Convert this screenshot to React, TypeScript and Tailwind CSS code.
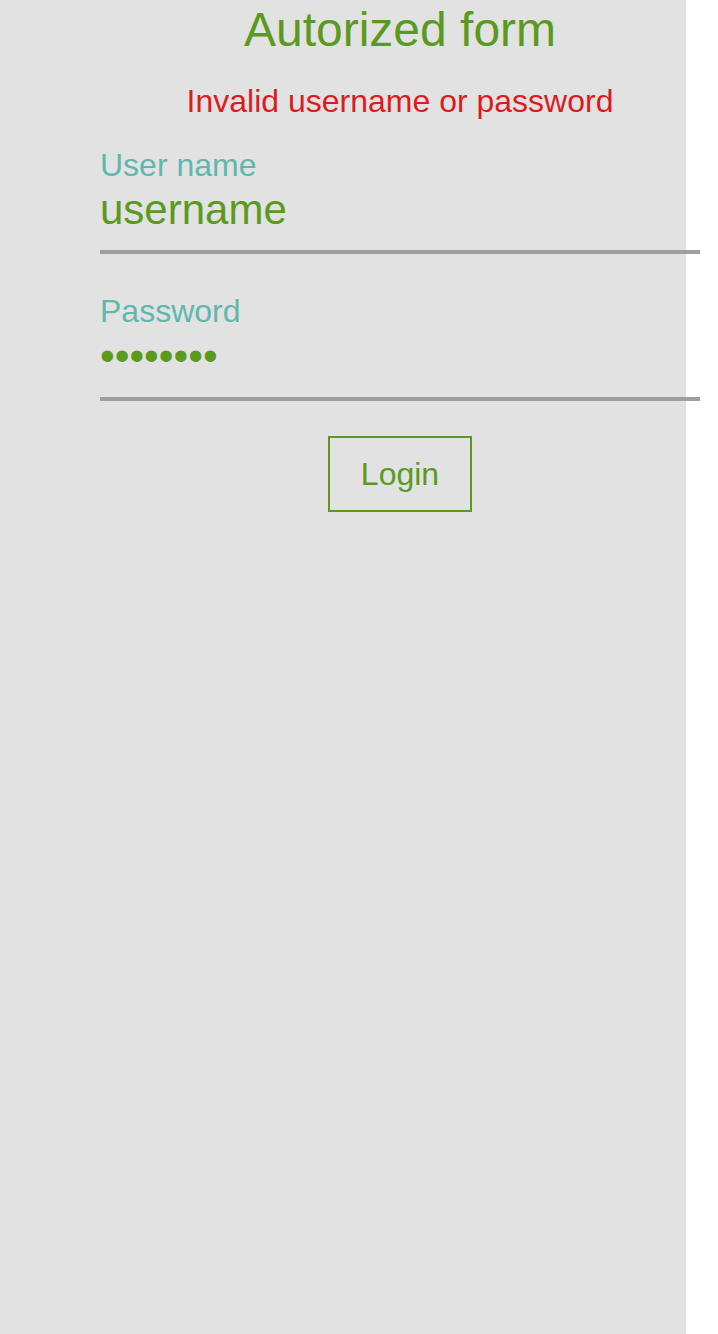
import { useState } from 'react';

export default function App() {
  const [username, setUsername] = useState('username');
  const [password, setPassword] = useState('12345678');

  return (
    <div className="w-[686px] min-h-screen bg-[#e2e2e2] font-['Liberation_Sans',Arial,sans-serif]">
      <form
        onSubmit={(e) => e.preventDefault()}
        className="ml-[100px] w-[600px] pt-[2px] flex flex-col"
      >
        <h1 className="text-center text-[48px] leading-[normal] font-normal text-[#5a9a1e]">
          Autorized form
        </h1>

        <p className="mt-[26px] text-center text-[32px] leading-[normal] text-[#dd1b1f]">
          Invalid username or password
        </p>

        <label className="mt-[27px] text-[32px] leading-[normal] text-[#5fb7ae]">User name</label>
        <input
          value={username}
          onChange={(e) => setUsername(e.target.value)}
          type="text"
          className="w-full bg-transparent p-0 pt-[2px] pb-[16px] text-[42px] leading-[normal] text-[#5a9a1e] border-0 border-b-4 border-[#9e9e9e] outline-none"
        />

        <label className="mt-[39px] text-[32px] leading-[normal] text-[#5fb7ae]">Password</label>
        <input
          value={password}
          onChange={(e) => setPassword(e.target.value)}
          type="password"
          className="w-full bg-transparent p-0 pt-[2px] pb-[17px] text-[42px] leading-[normal] text-[#5a9a1e] border-0 border-b-4 border-[#9e9e9e] outline-none"
        />

        <button
          type="submit"
          className="mt-[35px] mx-auto w-[144px] h-[76px] border-2 border-[#5a9a1e] text-[32px] leading-[normal] text-[#5a9a1e] bg-transparent"
        >
          Login
        </button>
      </form>
    </div>
  );
}
